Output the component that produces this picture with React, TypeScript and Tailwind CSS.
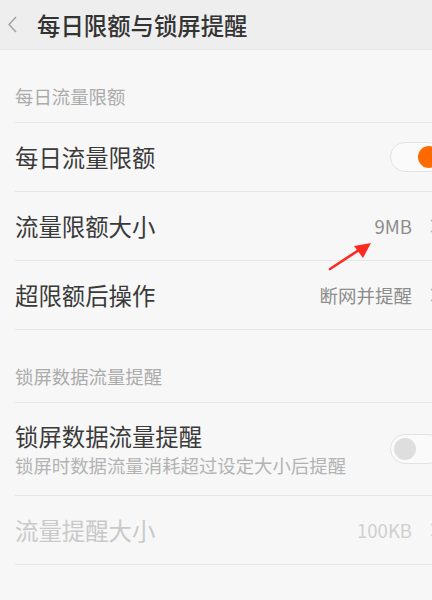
const font = { fontFamily: '"Noto Sans CJK SC", "Noto Sans", sans-serif' };

function Chevron({ light }: { light?: boolean }) {
  return (
    <svg width="8" height="14" viewBox="0 0 8 14" className="shrink-0">
      <path d="M1 1l6 6-6 6" fill="none" stroke={light ? '#dcdcdc' : '#b5b5b5'} strokeWidth="1.3" />
    </svg>
  );
}

function Toggle({ on }: { on: boolean }) {
  return (
    <div className="w-[54px] h-[30px] mr-[-6px] rounded-full border border-[#e2e2e2] bg-[#fafafa] flex items-center px-[3px] shrink-0">
      <div
        className={
          on
            ? 'ml-auto w-[22px] h-[22px] rounded-full bg-[#ff6a00]'
            : 'w-[22px] h-[22px] rounded-full bg-[#dedede]'
        }
      />
    </div>
  );
}

function SectionHeader({ label }: { label: string }) {
  return (
    <div className="ml-[15px] h-[73px] flex items-end pb-[15px] border-b border-[#e6e6e6]">
      <span className="text-[18.4px] leading-[22px] text-[#ababab]">{label}</span>
    </div>
  );
}

function Row({
  label,
  value,
  toggle,
  disabled,
}: {
  label: string;
  value?: string;
  toggle?: boolean;
  disabled?: boolean;
}) {
  return (
    <div className="ml-[15px] h-[69px] flex items-center border-b border-[#e6e6e6]">
      <span className={`text-[23.4px] leading-[28px] ${disabled ? 'text-[#c9c9c9]' : 'text-[#3a3a3a]'}`}>
        {label}
      </span>
      <div className="ml-auto flex items-center">
        {value !== undefined && (
          <>
            <span
              className={`text-[18.5px] leading-[22px] mr-[18px] ${disabled ? 'text-[#cfcfcf]' : 'text-[#8c8c8c]'}`}
            >
              {value}
            </span>
            <Chevron light={disabled} />
          </>
        )}
        {toggle !== undefined && <Toggle on={toggle} />}
      </div>
    </div>
  );
}

export default function App() {
  return (
    <div className="w-[432px] h-[600px] overflow-hidden bg-[#f7f7f7] relative" style={font}>
      {/* Header */}
      <div className="h-[50px] bg-[#eeeeee] flex items-center border-b border-[#e8e8e8]">
        <div className="w-[37px] flex pl-[7px]">
          <svg width="11" height="17" viewBox="0 0 11 17">
            <path d="M9 1L2 8.5l7 7.5" fill="none" stroke="#a0a0a0" strokeWidth="1.4" />
          </svg>
        </div>
        <h1 className="text-[23.4px] leading-[28px] font-medium text-[#333]">每日限额与锁屏提醒</h1>
      </div>

      <div className="w-[460px] pr-[22px]">
        <SectionHeader label="每日流量限额" />
        <Row label="每日流量限额" toggle />
        <Row label="流量限额大小" value="9MB" />
        <Row label="超限额后操作" value="断网并提醒" />

        <SectionHeader label="锁屏数据流量提醒" />
        <div className="ml-[15px] h-[93px] flex items-center border-b border-[#e6e6e6]">
          <div className="flex flex-col">
            <span className="text-[23.4px] leading-[28px] text-[#3a3a3a]">锁屏数据流量提醒</span>
            <span className="text-[18.4px] leading-[22px] text-[#b3b3b3] mt-[4px]">
              锁屏时数据流量消耗超过设定大小后提醒
            </span>
          </div>
          <div className="ml-auto">
            <Toggle on={false} />
          </div>
        </div>
        <Row label="流量提醒大小" value="100KB" disabled />
      </div>

      {/* annotation arrow */}
      <svg className="absolute left-[326px] top-[238px]" width="50" height="36" viewBox="0 0 50 36">
        <path d="M4 31L36 10" stroke="#ff2a1f" strokeWidth="2.6" strokeLinecap="round" />
        <path d="M45 5L28 8L37 20Z" fill="#ff2a1f" />
      </svg>
    </div>
  );
}
